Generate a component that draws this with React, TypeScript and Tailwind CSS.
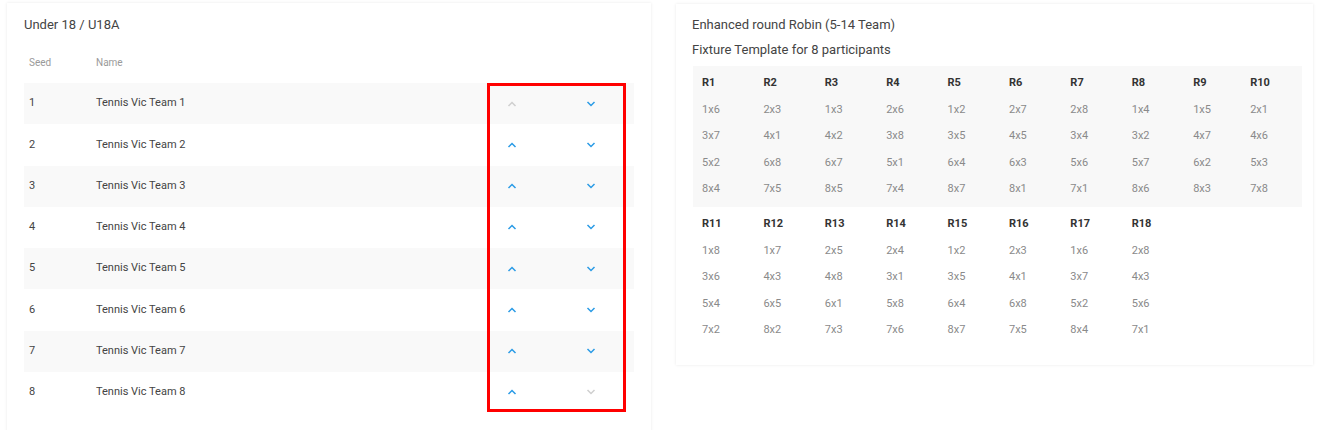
import React from 'react';

const teams = [1, 2, 3, 4, 5, 6, 7, 8];

const blockOne = {
  heads: ['R1', 'R2', 'R3', 'R4', 'R5', 'R6', 'R7', 'R8', 'R9', 'R10'],
  rows: [
    ['1x6', '2x3', '1x3', '2x6', '1x2', '2x7', '2x8', '1x4', '1x5', '2x1'],
    ['3x7', '4x1', '4x2', '3x8', '3x5', '4x5', '3x4', '3x2', '4x7', '4x6'],
    ['5x2', '6x8', '6x7', '5x1', '6x4', '6x3', '5x6', '5x7', '6x2', '5x3'],
    ['8x4', '7x5', '8x5', '7x4', '8x7', '8x1', '7x1', '8x6', '8x3', '7x8'],
  ],
};

const blockTwo = {
  heads: ['R11', 'R12', 'R13', 'R14', 'R15', 'R16', 'R17', 'R18'],
  rows: [
    ['1x8', '1x7', '2x5', '2x4', '1x2', '2x3', '1x6', '2x8'],
    ['3x6', '4x3', '4x8', '3x1', '3x5', '4x1', '3x7', '4x3'],
    ['5x4', '6x5', '6x1', '5x8', '6x4', '6x8', '5x2', '5x6'],
    ['7x2', '8x2', '7x3', '7x6', '8x7', '7x5', '8x4', '7x1'],
  ],
};

function Chevron({ up, disabled }: { up?: boolean; disabled?: boolean }) {
  return (
    <svg width="10" height="6" viewBox="0 0 10 6" className={disabled ? 'text-[#cfcfcf]' : 'text-[#2a9be6]'}>
      <polyline
        points={up ? '1.5,5 5,1.5 8.5,5' : '1.5,1 5,4.5 8.5,1'}
        fill="none"
        stroke="currentColor"
        strokeWidth="1.5"
      />
    </svg>
  );
}

function Cell({ children, bold, last }: { children: React.ReactNode; bold?: boolean; last?: boolean }) {
  return (
    <div
      className={`h-[26.5px] flex items-center shrink-0 text-[11px] ${last ? 'w-[57px]' : 'w-[61.4px]'} ${
        bold ? 'font-bold text-[#333]' : 'text-[#8a8a8a]'
      }`}
    >
      {children}
    </div>
  );
}

function FixtureBlock({ data, shaded }: { data: { heads: string[]; rows: string[][] }; shaded?: boolean }) {
  return (
    <div className={`pl-[9px] pt-[4px] pb-[4.5px] ${shaded ? 'bg-[#f8f8f8]' : ''}`}>
      <div className="flex">
        {data.heads.map((h, i) => (
          <Cell key={h} bold last={i === 8}>
            {h}
          </Cell>
        ))}
      </div>
      {data.rows.map((row, r) => (
        <div key={r} className="flex">
          {row.map((v, i) => (
            <Cell key={i} last={i === 8}>
              {v}
            </Cell>
          ))}
        </div>
      ))}
    </div>
  );
}

export default function App() {
  return (
    <div
      className="relative w-[1318px] h-[430px] overflow-hidden bg-white"
      style={{ fontFamily: 'Roboto, "Liberation Sans", sans-serif' }}
    >
      <div className="flex items-start gap-[25px] pl-[7px] pt-[3px]">
        {/* Seeding card */}
        <div className="w-[644px] h-[460px] bg-white px-[17px] pt-[14px] shadow-[0_0_3px_rgba(0,0,0,0.09)]">
          <div className="text-[13px] leading-[16px] text-[#444]">Under 18 / U18A</div>
          <div className="mt-[19px] mb-[11px] h-[20px] flex items-center text-[10px] text-[#9a9a9a]">
            <div className="w-[72px] pl-[5px]">Seed</div>
            <div>Name</div>
          </div>
          {teams.map((n) => (
            <div
              key={n}
              className={`h-[41.25px] flex items-center text-[11px] text-[#444] ${n % 2 === 1 ? 'bg-[#f9f9f9]' : ''}`}
            >
              <div className="w-[72px] pl-[5px]">{n}</div>
              <div className="w-[376px]">Tennis Vic Team {n}</div>
              <div className="w-[80px] flex justify-center">
                <Chevron up disabled={n === 1} />
              </div>
              <div className="w-[78px] flex justify-center">
                <Chevron disabled={n === 8} />
              </div>
            </div>
          ))}
        </div>

        {/* Fixture template card */}
        <div className="w-[637px] mt-[1px] bg-white pl-[17px] pr-[11px] pt-[13px] pb-[17px] shadow-[0_0_3px_rgba(0,0,0,0.09)]">
          <div className="-ml-[1px] text-[13px] leading-[16px] text-[#444]">Enhanced round Robin (5-14 Team)</div>
          <div className="-ml-[1px] mt-[9px] text-[13px] leading-[16px] text-[#444]">Fixture Template for 8 participants</div>
          <div className="mt-[8px]">
            <FixtureBlock data={blockOne} shaded />
            <FixtureBlock data={blockTwo} />
          </div>
        </div>
      </div>

      {/* highlight annotation */}
      <div className="absolute left-[487px] top-[83px] w-[139px] h-[329px] border-[3px] border-[#ff0000] pointer-events-none" />
    </div>
  );
}
